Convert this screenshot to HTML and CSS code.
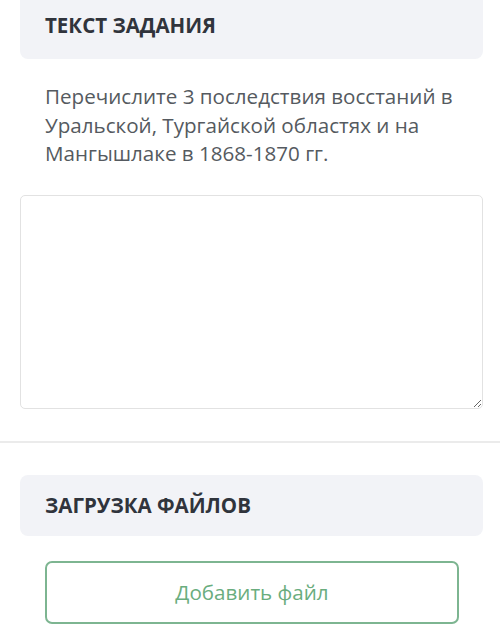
FILE: index.html
```html
<!DOCTYPE html>
<html lang="ru">
<head>
    <meta charset="UTF-8">
    <meta name="viewport" content="width=device-width, initial-scale=1.0">
    <title>Задание</title>
    <link rel="stylesheet" href="styles.css">
</head>
<body>

    <div class="task">
        <div class="panel-head">ТЕКСТ ЗАДАНИЯ</div>
        <p class="task-text">Перечислите 3 последствия восстаний в Уральской, Тургайской областях и на Мангышлаке в 1868-1870 гг.</p>
        <textarea class="answer"></textarea>
    </div>

    <div class="upload">
        <div class="panel-head">ЗАГРУЗКА ФАЙЛОВ</div>
        <button class="add-file">Добавить файл</button>
    </div>

</body>
</html>
```

FILE: styles.css
```css
body { margin: 0; font-family: "Open Sans", "Noto Sans", sans-serif; background: #fff; color: #555a60; }
.task { padding: 0 17px 32px 20px; border-bottom: 2px solid #ebebeb; }
.task .panel-head { margin-top: -10px; height: 69px; }
.panel-head {
    background: #f2f3f7; border-radius: 8px; height: 61px;
    display: flex; align-items: center; padding-left: 25px;
    font-size: 20.5px; font-weight: 700; color: #30343c;
}
.task-text { margin: 23px 18px 0 25px; font-size: 20.6px; line-height: 28.5px; }
.answer {
    display: block; box-sizing: border-box; width: 100%; height: 214px; margin-top: 27px;
    border: 1.5px solid #e2e2e2; border-radius: 5px; background: #fff; resize: vertical;
}
.upload { padding: 32px 17px 0 20px; }
.add-file {
    display: block; width: 414px; height: 63px; margin: 25px 0 0 25px;
    border: 2px solid #7db591; border-radius: 7px; background: #fff;
    font-family: inherit; font-size: 20.6px; color: #6aad7e; cursor: pointer;
}
```
